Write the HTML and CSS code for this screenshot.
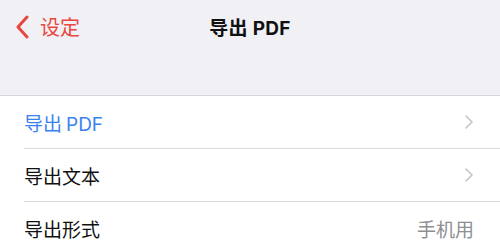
FILE: index.html
```html
<!DOCTYPE html>
<html lang="zh">
<head>
<meta charset="utf-8">
<link rel="stylesheet" href="styles.css">
</head>
<body>
<div class="page">
  <header class="nav">
    <div class="nav-bar">
      <a class="back">
        <svg class="back-icon" width="14" height="24" viewBox="0 0 14 24"><path d="M12 2 L3 12 L12 22" fill="none" stroke="currentColor" stroke-width="3" stroke-linecap="round" stroke-linejoin="round"/></svg>
        <span class="back-text">设定</span>
      </a>
      <div class="title">导出 PDF</div>
    </div>
  </header>
  <ul class="list">
    <li class="row"><span class="label blue">导出<span class="latin">PDF</span></span><svg class="chev" width="8" height="14" viewBox="0 0 8 14"><path d="M1 1 L7 7 L1 13" fill="none" stroke="currentColor" stroke-width="1.6" stroke-linecap="round" stroke-linejoin="round"/></svg></li>
    <li class="row"><span class="label">导出文本</span><svg class="chev" width="8" height="14" viewBox="0 0 8 14"><path d="M1 1 L7 7 L1 13" fill="none" stroke="currentColor" stroke-width="1.6" stroke-linecap="round" stroke-linejoin="round"/></svg></li>
    <li class="row"><span class="label">导出形式</span><span class="value">手机用</span></li>
  </ul>
</div>
</body>
</html>
```
FILE: styles.css
```css
* { box-sizing: border-box; }
html, body { margin: 0; padding: 0; }
body {
  width: 500px;
  height: 249px;
  overflow: hidden;
  background: #ffffff;
  font-family: "Inter", "Noto Sans CJK SC", sans-serif;
}
.nav {
  height: 96px;
  background: #f0f0f5;
  border-bottom: 1px solid #d6d6da;
}
.nav-bar {
  position: relative;
  height: 52px;
  display: flex;
  align-items: center;
  justify-content: center;
}
.back {
  position: absolute;
  left: 15px;
  top: 14px;
  display: flex;
  align-items: center;
  color: #e8463f;
}
.back-icon { display: block; }
.back-text {
  margin-left: 11px;
  margin-top: 2px;
  font-size: 20px;
  line-height: 24px;
}
.title {
  font-size: 19px;
  font-weight: 700;
  color: #111;
  letter-spacing: 0.3px;
}
.list {
  list-style: none;
  margin: 0;
  padding: 0 0 0 24px;
}
.row {
  height: 53px;
  display: flex;
  align-items: center;
  justify-content: space-between;
  padding-right: 26px;
  border-bottom: 1px solid #dcdcdf;
}
.row:last-child { border-bottom: none; }
.label {
  font-size: 19px;
  color: #111;
}
.label.blue { color: #3b82f0; }
.latin { margin-left: 4px; }
.chev { color: #c4c4c8; display: block; margin-right: 1px; }
.value {
  font-size: 19px;
  color: #8e8e93;
}
```
